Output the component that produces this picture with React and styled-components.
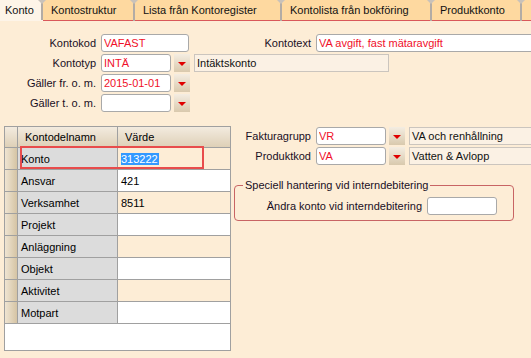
import React from 'react';
import styled, { createGlobalStyle } from 'styled-components';

const GlobalStyle = createGlobalStyle`
  html, body {
    margin: 0;
    padding: 0;
    background: #fdedd6;
  }
  body {
    font-family: "Liberation Sans", Arial, sans-serif;
    font-size: 11px;
    color: #000;
  }
  * { box-sizing: border-box; }
`;

const tabs = [
  { label: 'Konto', w: 43, active: true },
  { label: 'Kontostruktur', w: 92 },
  { label: 'Lista från Kontoregister', w: 147 },
  { label: 'Kontolista från bokföring', w: 150 },
  { label: 'Produktkonto', w: 90 },
  { label: '', w: 80 },
];

const rows = [
  { name: 'Konto', value: '313222', selected: true },
  { name: 'Ansvar', value: '421' },
  { name: 'Verksamhet', value: '8511' },
  { name: 'Projekt', value: '' },
  { name: 'Anläggning', value: '' },
  { name: 'Objekt', value: '' },
  { name: 'Aktivitet', value: '' },
  { name: 'Motpart', value: '' },
];

const App = () => {
  return (
    <Window>
      <GlobalStyle />
      <TabStrip>
        {tabs.map((t, i) => (
          <Tab key={i} $w={t.w} $active={t.active}>{t.label}</Tab>
        ))}
      </TabStrip>

      <Body>
        <FormRow>
          <Label $w={96}>Kontokod</Label>
          <TextInput $w={88} readOnly defaultValue="VAFAST" />
          <Label $w={122}>Kontotext</Label>
          <TextInput $w={230} readOnly defaultValue="VA avgift, fast mätaravgift" />
        </FormRow>
        <FormRow>
          <Label $w={96}>Kontotyp</Label>
          <TextInput $w={70} readOnly defaultValue="INTÄ" />
          <DropButton />
          <DescBox $w={195}>Intäktskonto</DescBox>
        </FormRow>
        <FormRow>
          <Label $w={96}>Gäller fr. o. m.</Label>
          <TextInput $w={70} readOnly defaultValue="2015-01-01" />
          <DropButton />
        </FormRow>
        <FormRow>
          <Label $w={96}>Gäller t. o. m.</Label>
          <TextInput $w={70} readOnly defaultValue="" />
          <DropButton />
        </FormRow>

        <Lower>
          <DataGrid>
            <Corner />
            <HeadCell>Kontodelnamn</HeadCell>
            <HeadCell $last>Värde</HeadCell>
            {rows.map((r, i) => (
              <React.Fragment key={r.name}>
                <RowHead />
                <NameCell>{r.name}</NameCell>
                <ValueCell $alt={i % 2 === 0}>
                  {r.selected ? <Selected>{r.value}</Selected> : r.value}
                </ValueCell>
              </React.Fragment>
            ))}
            <Highlight />
          </DataGrid>

          <Side>
            <FormRow>
              <Label $w={77}>Fakturagrupp</Label>
              <TextInput $w={70} readOnly defaultValue="VR" />
              <DropButton />
              <DescBox $w={140}>VA och renhållning</DescBox>
            </FormRow>
            <FormRow>
              <Label $w={77}>Produktkod</Label>
              <TextInput $w={70} readOnly defaultValue="VA" />
              <DropButton />
              <DescBox $w={140}>Vatten &amp; Avlopp</DescBox>
            </FormRow>

            <Group>
              <legend>Speciell hantering vid interndebitering</legend>
              <FormRow>
                <Label $w={179}>Ändra konto vid interndebitering</Label>
                <TextInput $w={70} readOnly defaultValue="" />
              </FormRow>
            </Group>
          </Side>
        </Lower>
      </Body>
    </Window>
  );
};

export default App;

const Window = styled.div`
  width: 531px;
  height: 358px;
  overflow: hidden;
  background: #fdedd6;
`;

const TabStrip = styled.div`
  display: flex;
  height: 21px;
  overflow: hidden;
`;

const Tab = styled.div`
  position: relative;
  flex: none;
  width: ${(p) => p.$w}px;
  height: 21px;
  padding: 4px 0 0 ${(p) => (p.$active ? 5 : 8)}px;
  background: ${(p) => (p.$active ? '#fdf4e8' : '#fed9a0')};
  border-bottom: 1px solid ${(p) => (p.$active ? 'transparent' : '#d9585a')};
  white-space: nowrap;
  color: #111;

  &::after {
    content: '';
    position: absolute;
    right: 0;
    top: 3px;
    bottom: ${(p) => (p.$active ? '0' : '-1px')};
    width: 2px;
    background: #b3aca5;
  }

  &::before {
    content: '';
    position: absolute;
    right: -3px;
    top: 0;
    width: 0;
    height: 0;
    border-left: 4px solid transparent;
    border-right: 4px solid transparent;
    border-top: 4px solid #c9c2ba;
    z-index: 1;
  }
`;

const Body = styled.div`
  padding-top: 12px;
`;

const FormRow = styled.div`
  display: flex;
  align-items: center;
  height: 20px;
`;

const Label = styled.div`
  flex: none;
  width: ${(p) => p.$w}px;
  margin-right: 5px;
  text-align: right;
  white-space: nowrap;
  color: #1a0f1f;
`;

const TextInput = styled.input`
  flex: none;
  width: ${(p) => p.$w}px;
  height: 18px;
  padding: 0 2px;
  border: 1px solid #a9a9a9;
  border-radius: 3px;
  background: #fff;
  color: #f0102a;
  font-family: inherit;
  font-size: 11px;
  outline: none;
`;

const DropButton = styled.div`
  flex: none;
  position: relative;
  width: 16px;
  height: 18px;
  margin-left: 3px;
  background: linear-gradient(#f4ede2, #d9c9ad);

  &::after {
    content: '';
    position: absolute;
    left: 4px;
    top: 8px;
    border-left: 4px solid transparent;
    border-right: 4px solid transparent;
    border-top: 4px solid #e00000;
  }
`;

const DescBox = styled.div`
  flex: none;
  width: ${(p) => p.$w}px;
  height: 18px;
  margin-left: 4px;
  padding: 1px 2px 0;
  border: 1px solid #cbc5be;
  background: #fbf1e4;
  white-space: nowrap;
  line-height: 15px;
  color: #111;
`;

const Lower = styled.div`
  display: flex;
  align-items: flex-start;
  margin-top: 13px;
  padding-left: 4px;
`;

const DataGrid = styled.div`
  position: relative;
  flex: none;
  width: 227px;
  height: 225px;
  border: 1px solid #a0a0a0;
  background: #fff;
  display: grid;
  grid-template-columns: 13px 100px 1fr;
  grid-template-rows: 21px;
  grid-auto-rows: 22px;
  align-content: start;
`;

const Cell = styled.div`
  display: flex;
  align-items: center;
  border-right: 1px solid #a0a0a0;
  border-bottom: 1px solid #a0a0a0;
  white-space: nowrap;
  overflow: hidden;
`;

const Corner = styled(Cell)`
  background: linear-gradient(#f3ebdf, #ded0b7);
`;

const HeadCell = styled(Cell)`
  padding-left: 7px;
  background: linear-gradient(#f3ebdf, #ded0b7);
  border-right: ${(p) => (p.$last ? 'none' : '1px solid #a0a0a0')};
`;

const RowHead = styled(Cell)`
  background: linear-gradient(to right, #efe4d2, #d5c4a4);
`;

const NameCell = styled(Cell)`
  padding-left: 3px;
  background: #dcdcdc;
`;

const ValueCell = styled(Cell)`
  padding-left: 3px;
  border-right: none;
  background: ${(p) => (p.$alt ? '#fdedd6' : '#fff')};
`;

const Selected = styled.span`
  background: #3399ff;
  color: #fff;
  line-height: 12px;
  padding: 0 1px 0 0;
`;

const Highlight = styled.div`
  position: absolute;
  left: 15px;
  top: 19px;
  width: 184px;
  height: 23px;
  border: 2px solid #e84c4c;
  pointer-events: none;
`;

const Side = styled.div`
  flex: none;
  margin-left: 3px;
`;

const Group = styled.fieldset`
  width: 280px;
  margin: 13px 0 0;
  padding: 4px 8px 4px;
  border: 1px solid #c86464;
  border-radius: 4px;

  legend {
    padding: 0 2px;
    line-height: 13px;
    color: #1a0f1f;
  }
`;
